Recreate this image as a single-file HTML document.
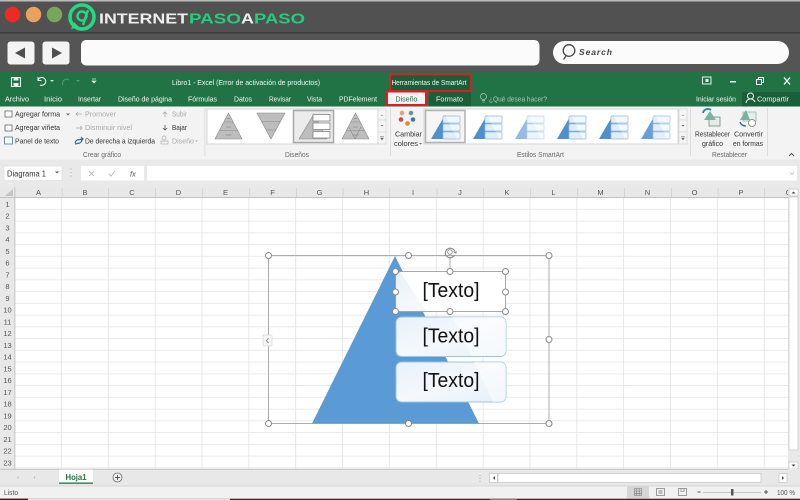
<!DOCTYPE html>
<html lang="es"><head><meta charset="utf-8"><title>Excel SmartArt</title>
<style>
html,body{margin:0;padding:0;background:#fff;width:800px;height:500px;overflow:hidden}
svg{display:block;filter:blur(.3px)}
text{font-family:"Liberation Sans",sans-serif;font-size:7.5px;fill:#333}
.g{fill:#222}.w{fill:#f2f7f4}.d{fill:#aaa}.h{fill:#555;font-size:7.5px}
.handle{fill:#fff;stroke:#8a8a8a;stroke-width:1}
</style></head><body>
<svg width="800" height="500" viewBox="0 0 800 500" xmlns="http://www.w3.org/2000/svg">
<defs>
<pattern id="grid" x="15" y="198" width="46.85" height="11.75" patternUnits="userSpaceOnUse">
<rect width="46.85" height="11.75" fill="#fff"/>
<rect x="46.1" width="1" height="11.75" fill="#e0e0e0"/>
<rect y="11" width="46.85" height="1" fill="#e4e4e4"/>
</pattern>
<linearGradient id="bx" x1="0" y1="0" x2="1" y2="1"><stop offset="0" stop-color="#e8f1f9"/><stop offset=".5" stop-color="#f4f8fc"/><stop offset="1" stop-color="#e6f0f9"/></linearGradient>
<g id="pyr"><path d="M13.500 0L27 26H0z" fill="#bdbdbd" stroke="#888" stroke-width=".6"/><path d="M9 9H18M4.500 17.500H22.500" stroke="#888" stroke-width=".6"/><path d="M12 5.500h3M11 14h5M10.500 22h6" stroke="#777" stroke-width=".6"/></g>
<g id="sa"><path d="M14 0L26 24H0z" fill="#4f8fcf"/><g fill="#f2f7fc" fill-opacity=".9" stroke="#8fb9e2" stroke-width=".7"><rect x="12" y="1" width="17" height="7" rx=".8"/><rect x="12" y="9" width="17" height="7" rx=".8"/><rect x="12" y="17" width="17" height="7" rx=".8"/></g></g>
</defs>

<!-- browser chrome -->
<rect width="800" height="72" fill="#515151"/>
<rect width="800" height="1.500" fill="#bdbdbd"/>
<rect y="32" width="800" height="1.500" fill="#3b3b3b"/>
<rect y="33.500" width="800" height="38.500" fill="#555"/>
<circle cx="12.500" cy="14.500" r="7.700" fill="#ef2a25"/>
<circle cx="33.500" cy="14.500" r="7.700" fill="#e9a15c"/>
<circle cx="54.500" cy="14.500" r="7.700" fill="#78a75b"/>
<circle cx="82" cy="17" r="12" fill="none" stroke="#1fdc80" stroke-width="3.600"/>
<path d="M71 29l3-7 5 5z" fill="#1fdc80"/>
<circle cx="82" cy="16" r="4.500" fill="none" stroke="#1fdc80" stroke-width="2.400"/>
<path d="M88 10L83 25" stroke="#1fdc80" stroke-width="2.400" fill="none"/>
<text x="99" y="23.500" style="font-size:15px;font-weight:bold;fill:#eee" textLength="89" lengthAdjust="spacingAndGlyphs">INTERNET</text>
<text x="189" y="23.500" style="font-size:15px;font-weight:bold;fill:#1fcf7b" textLength="52" lengthAdjust="spacingAndGlyphs">PASO</text>
<text x="241" y="23.500" style="font-size:15px;font-weight:bold;fill:#eee" textLength="13" lengthAdjust="spacingAndGlyphs">A</text>
<text x="254" y="23.500" style="font-size:15px;font-weight:bold;fill:#1fcf7b" textLength="51" lengthAdjust="spacingAndGlyphs">PASO</text>
<rect x="7.500" y="41.500" width="27" height="23" rx="3" fill="#f4f4f4"/>
<path d="M15 53L25 47.500V58.500z" fill="#4e4e4e"/>
<rect x="42.500" y="41.500" width="27" height="23" rx="3" fill="#f4f4f4"/>
<path d="M62 53L52 47.500V58.500z" fill="#4e4e4e"/>
<rect x="81" y="40" width="458.500" height="25.500" rx="5" fill="#fbfbfb"/>
<rect x="553" y="41" width="236" height="23" rx="11.500" fill="#fbfbfb"/>
<circle cx="569" cy="50.500" r="5.800" fill="none" stroke="#444" stroke-width="1.300"/>
<path d="M566 56l-2.500 3.500" stroke="#444" stroke-width="1.300"/>
<text x="579" y="55" style="font-size:8.500px;font-style:italic;font-weight:bold;fill:#444" textLength="33">Search</text>

<!-- Excel title & tabs -->
<rect y="72" width="800" height="34.500" fill="#217346"/>
<path d="M11.500 77.500h9v9h-9z" fill="none" stroke="#e8f2ec" stroke-width="1.100"/><rect x="13.500" y="77.500" width="5" height="3" fill="#e8f2ec"/><rect x="13.500" y="83" width="5" height="3" fill="#e8f2ec"/>
<path d="M38 80a4 4 0 1 1 2 5M38 77v3.500h3.500" fill="none" stroke="#f0f5f2" stroke-width="1.100"/>
<path d="M50 80l2 2 2-2z" fill="#d8e7de"/><path d="M63 85a4 4 0 0 1 6-5" fill="none" stroke="#5a9a75"/><path d="M76 80l2 2 2-2z" fill="#5a9a75"/>
<path d="M92 79h4M92 81l2 2 2-2z" stroke="#d8e7de" stroke-width=".7" fill="#d8e7de"/>
<text x="172" y="85" class="w" textLength="148" lengthAdjust="spacingAndGlyphs">Libro1 - Excel (Error de activación de productos)</text>
<rect x="390" y="74.500" width="81" height="16.500" fill="#1a5f39" stroke="#e01b24" stroke-width="2"/>
<text x="391.500" y="85" class="w" style="font-size:7px" textLength="75" lengthAdjust="spacingAndGlyphs">Herramientas de SmartArt</text>
<rect x="702.500" y="77" width="8.500" height="7" fill="none" stroke="#e8f2ec"/><rect x="705.500" y="79" width="3" height="3" fill="#e8f2ec"/>
<rect x="730" y="81" width="6" height="1.500" fill="#f2f7f4"/>
<path d="M756.500 79.500h5v5h-5zM758.500 79v-1.500h5v5h-1.500" fill="none" stroke="#f2f7f4"/>
<path d="M784 77.500l6 7M790 77.500l-6 7" stroke="#fff" stroke-width="1.300"/>
<g class="tabs">
<text x="5" y="101.500" class="w" textLength="24" lengthAdjust="spacingAndGlyphs">Archivo</text>
<text x="44" y="101.500" class="w" textLength="18" lengthAdjust="spacingAndGlyphs">Inicio</text>
<text x="78" y="101.500" class="w" textLength="23" lengthAdjust="spacingAndGlyphs">Insertar</text>
<text x="118" y="101.500" class="w" textLength="54" lengthAdjust="spacingAndGlyphs">Diseño de página</text>
<text x="188" y="101.500" class="w" textLength="29" lengthAdjust="spacingAndGlyphs">Fórmulas</text>
<text x="234" y="101.500" class="w" textLength="18" lengthAdjust="spacingAndGlyphs">Datos</text>
<text x="269" y="101.500" class="w" textLength="22" lengthAdjust="spacingAndGlyphs">Revisar</text>
<text x="307" y="101.500" class="w" textLength="15" lengthAdjust="spacingAndGlyphs">Vista</text>
<text x="339" y="101.500" class="w" textLength="38" lengthAdjust="spacingAndGlyphs">PDFelement</text>
</g>
<rect x="429" y="92" width="42" height="14.500" fill="#1a5f39"/>
<rect x="387" y="91.500" width="39" height="13.500" fill="#f3f3f3" stroke="#e01b24" stroke-width="2"/>
<text x="395.500" y="101.500" style="fill:#1e6b41" textLength="22" lengthAdjust="spacingAndGlyphs">Diseño</text>
<text x="436" y="101.500" class="w" textLength="27" lengthAdjust="spacingAndGlyphs">Formato</text>
<circle cx="483.500" cy="96.500" r="3" fill="none" stroke="#a5c8b3" stroke-width=".8"/><path d="M482 100.500h3M482.500 102h2" stroke="#a5c8b3" stroke-width=".8"/>
<text x="489" y="101.500" style="fill:#a5c8b3" textLength="58" lengthAdjust="spacingAndGlyphs">¿Qué desea hacer?</text>
<text x="696" y="101.500" class="w" textLength="40" lengthAdjust="spacingAndGlyphs">Iniciar sesión</text>
<rect x="742" y="92" width="58" height="14.500" fill="#1a5f39"/>
<circle cx="750.500" cy="96" r="3" fill="none" stroke="#f2f7f4"/><path d="M746 103c.5-3 2.500-4 4.500-4s3.500 1 4.500 3" fill="none" stroke="#f2f7f4"/>
<text x="757" y="101.500" class="w" textLength="32" lengthAdjust="spacingAndGlyphs">Compartir</text>

<!-- ribbon -->
<rect y="106.500" width="800" height="53" fill="#f3f3f3"/>
<rect y="159.500" width="800" height="27.500" fill="#e9e9e9"/>
<rect x="5" y="111" width="7" height="6" fill="#fff" stroke="#555" stroke-width=".7"/><rect x="5" y="125" width="7" height="6" fill="#fff" stroke="#555" stroke-width=".7"/><rect x="4.500" y="137" width="8" height="7" fill="#fff" stroke="#3c78a8" stroke-width=".8"/>
<text x="15" y="116.500" textLength="45" lengthAdjust="spacingAndGlyphs">Agregar forma</text><path d="M66 113.500l2 2 2-2z" fill="#666"/>
<text x="15" y="130" textLength="45" lengthAdjust="spacingAndGlyphs">Agregar viñeta</text>
<text x="15" y="143.500" textLength="44" lengthAdjust="spacingAndGlyphs">Panel de texto</text>
<path d="M76 114h6M78 112l-2 2 2 2" fill="none" stroke="#aaa" stroke-width=".8"/>
<text x="85" y="116.500" class="d" textLength="31" lengthAdjust="spacingAndGlyphs">Promover</text>
<path d="M76 128h6M80 126l2 2-2 2" fill="none" stroke="#aaa" stroke-width=".8"/>
<text x="85" y="130" class="d" textLength="47" lengthAdjust="spacingAndGlyphs">Disminuir nivel</text>
<path d="M75 143c1-4 4-3 7-4M81 137l2 2-2 2" fill="none" stroke="#2a6fa8" stroke-width="1.200"/><path d="M82 140c-1 4-4 3-7 4" fill="none" stroke="#2a6fa8" stroke-width="1.200"/>
<text x="85" y="143.500" textLength="70" lengthAdjust="spacingAndGlyphs">De derecha a izquierda</text>
<path d="M165 117v-5M163 114l2-2 2 2" fill="none" stroke="#aaa" stroke-width=".8"/>
<text x="172" y="116.500" class="d" textLength="15" lengthAdjust="spacingAndGlyphs">Subir</text>
<path d="M165 125v5M163 128l2 2 2-2" fill="none" stroke="#555" stroke-width=".8"/>
<text x="172" y="130" textLength="15" lengthAdjust="spacingAndGlyphs">Bajar</text>
<circle cx="164" cy="138" r="2" fill="none" stroke="#aaa" stroke-width=".7"/><rect x="161" y="141" width="7" height="3" fill="none" stroke="#aaa" stroke-width=".7"/>
<text x="172" y="143.500" class="d" textLength="22" lengthAdjust="spacingAndGlyphs">Diseño</text><path d="M195 140.500l1.500 1.500 1.500-1.500z" fill="#aaa"/>
<text x="83" y="157" style="fill:#666" textLength="38" lengthAdjust="spacingAndGlyphs">Crear gráfico</text>
<rect x="204.500" y="108" width=".8" height="48" fill="#d8d8d8"/>

<rect x="207" y="109" width="171" height="35" fill="#fff" stroke="#d4d4d4"/>
<use href="#pyr" x="215" y="113"/>
<path d="M257 113h28l-14 26z" fill="#bdbdbd" stroke="#888" stroke-width=".6"/><path d="M261.500 121.500h19M266 130h10" stroke="#888" stroke-width=".6"/>
<rect x="293.500" y="110.500" width="40" height="32" fill="#ececec" stroke="#a8a8a8" stroke-width="1.500"/>
<path d="M314 114l13 25h-28z" fill="#bdbdbd" stroke="#888" stroke-width=".6"/>
<g fill="#fff" stroke="#777" stroke-width=".7"><rect x="313" y="114.500" width="17" height="6.500"/><rect x="313" y="123" width="17" height="6.500"/><rect x="313" y="131.500" width="17" height="6.500"/></g>
<use href="#pyr" x="342" y="113"/><path d="M349 127l6 12 6-12" fill="none" stroke="#888" stroke-width=".6"/>
<g fill="#f5f5f5" stroke="#d4d4d4" stroke-width=".7"><rect x="378" y="109" width="8" height="11"/><rect x="378" y="120" width="8" height="12"/><rect x="378" y="132" width="8" height="12"/></g>
<path d="M380.500 116l1.500-1.500 1.500 1.500z" fill="#aaa"/><path d="M380.500 125l1.500 1.500 1.500-1.500z" fill="#777"/><path d="M380 136.500h4M380.500 138l1.500 2 1.500-2z" stroke="#666" stroke-width=".5" fill="#666"/>
<text x="285" y="157" style="fill:#666" textLength="24" lengthAdjust="spacingAndGlyphs">Diseños</text>
<rect x="390" y="108" width=".8" height="48" fill="#d8d8d8"/>

<circle cx="402" cy="113" r="2.300" fill="#e9a07a"/><circle cx="411" cy="113" r="2.300" fill="#65958f"/><circle cx="401" cy="119.500" r="2.300" fill="#cf4a4a"/><circle cx="413" cy="119.500" r="2.300" fill="#3d72b5"/><circle cx="407.500" cy="123.500" r="2.300" fill="#db8b35"/>
<text x="395" y="136.500" textLength="27" lengthAdjust="spacingAndGlyphs">Cambiar</text>
<text x="394" y="146" textLength="24" lengthAdjust="spacingAndGlyphs">colores</text><path d="M419 143l1.500 1.500 1.500-1.500z" fill="#666"/>

<rect x="424" y="109" width="254" height="35" fill="#fff" stroke="#d4d4d4"/>
<rect x="425.500" y="110.500" width="39.500" height="32" fill="#f6f6f6" stroke="#b2b2b2" stroke-width="1.500"/>
<use href="#sa" x="431" y="115"/><use href="#sa" x="473" y="115"/>
<use href="#sa" x="515" y="115" opacity=".6"/><use href="#sa" x="557" y="115"/><use href="#sa" x="599" y="115"/><use href="#sa" x="641" y="115" opacity=".85"/>
<g fill="#f5f5f5" stroke="#d4d4d4" stroke-width=".7"><rect x="679" y="109" width="8" height="11"/><rect x="679" y="120" width="8" height="12"/><rect x="679" y="132" width="8" height="12"/></g>
<path d="M681.500 116l1.500-1.500 1.500 1.500z" fill="#aaa"/><path d="M681.500 125l1.500 1.500 1.500-1.500z" fill="#555"/><path d="M681 136.500h4M681.500 138l1.500 2 1.500-2z" stroke="#666" stroke-width=".5" fill="#666"/>
<text x="517" y="157" style="fill:#666" textLength="47" lengthAdjust="spacingAndGlyphs">Estilos SmartArt</text>
<rect x="690" y="108" width=".8" height="48" fill="#d8d8d8"/>

<rect x="709" y="117" width="11" height="9" fill="#e6ebe9" stroke="#6d8a80" stroke-width=".8"/><path d="M704 120l6-9 6 9z" fill="#7ab3a0"/><path d="M703 113a5 5 0 0 1 8-3" fill="none" stroke="#2b7ab8" stroke-width="1.800"/>
<rect x="743" y="112" width="13" height="9" fill="#e9eeec" stroke="#8aa" stroke-width=".7"/><path d="M746 110l-6 10h10z" fill="#79b29f"/><circle cx="752" cy="123" r="3.500" fill="#fff" stroke="#777" stroke-width=".8"/><path d="M740 122c1 3 3 4 6 4" fill="none" stroke="#2b6fb8" stroke-width="1.500"/>
<text x="695" y="136.500" textLength="35" lengthAdjust="spacingAndGlyphs">Restablecer</text>
<text x="702" y="146" textLength="21" lengthAdjust="spacingAndGlyphs">gráfico</text>
<text x="734" y="136.500" textLength="29" lengthAdjust="spacingAndGlyphs">Convertir</text>
<text x="733" y="146" textLength="30" lengthAdjust="spacingAndGlyphs">en formas</text>
<text x="712" y="157" style="fill:#666" textLength="35" lengthAdjust="spacingAndGlyphs">Restablecer</text>
<rect x="767" y="108" width=".8" height="48" fill="#d8d8d8"/>
<path d="M789 156l2.500-2.500 2.500 2.500" fill="none" stroke="#555"/>

<!-- formula bar -->
<rect x="4" y="166" width="58" height="14.500" fill="#fff" stroke="#dcdcdc" stroke-width=".6"/>
<text x="7" y="176.500" style="font-size:8px" textLength="39" lengthAdjust="spacingAndGlyphs">Diagrama 1</text>
<path d="M55 171.500l2 2 2-2z" fill="#555"/>
<path d="M71 168.500v1M71 172v1M71 175.500v1" stroke="#aaa"/>
<rect x="81" y="166" width="63" height="14.500" fill="#fff"/>
<path d="M89 171l5 5M94 171l-5 5" stroke="#bbb"/><path d="M109 174l2 2 4-5" fill="none" stroke="#bbb"/>
<text x="130" y="176.500" style="font-size:7.500px;font-style:italic;fill:#555">fx</text>
<rect x="147" y="166" width="650" height="14.500" fill="#fff"/>
<path d="M790 172.500l2 2 2-2" fill="none" stroke="#ccc"/>

<!-- sheet -->
<rect x="0" y="187" width="800" height="11" fill="#e8e8e8"/>
<rect x="0" y="198" width="15" height="271" fill="#e8e8e8"/>
<rect x="15" y="198" width="773" height="271" fill="url(#grid)"/>
<rect x="0" y="197.200" width="788" height=".8" fill="#b8b8b8"/>
<rect x="14.500" y="187" width=".8" height="282" fill="#b8b8b8"/>
<path d="M5 196l8-7v7z" fill="#c4c4c4"/>
<g fill="#cfcfcf"><rect x="61.700" y="188" width=".8" height="9"/><rect x="108.300" y="188" width=".8" height="9"/><rect x="155.300" y="188" width=".8" height="9"/><rect x="202.300" y="188" width=".8" height="9"/><rect x="249.300" y="188" width=".8" height="9"/><rect x="296" y="188" width=".8" height="9"/><rect x="342.700" y="188" width=".8" height="9"/><rect x="389.300" y="188" width=".8" height="9"/><rect x="436.700" y="188" width=".8" height="9"/><rect x="483.300" y="188" width=".8" height="9"/><rect x="530.300" y="188" width=".8" height="9"/><rect x="577.300" y="188" width=".8" height="9"/><rect x="624" y="188" width=".8" height="9"/><rect x="671" y="188" width=".8" height="9"/><rect x="717.700" y="188" width=".8" height="9"/><rect x="764.300" y="188" width=".8" height="9"/></g>
<g class="cols" text-anchor="middle">
<text x="38.500" y="195" class="h">A</text><text x="85" y="195" class="h">B</text><text x="132" y="195" class="h">C</text><text x="178.500" y="195" class="h">D</text><text x="225.500" y="195" class="h">E</text><text x="272.500" y="195" class="h">F</text><text x="319.500" y="195" class="h">G</text><text x="366.500" y="195" class="h">H</text><text x="413" y="195" class="h">I</text><text x="460" y="195" class="h">J</text><text x="507" y="195" class="h">K</text><text x="553.500" y="195" class="h">L</text><text x="600.500" y="195" class="h">M</text><text x="647.500" y="195" class="h">N</text><text x="694.500" y="195" class="h">O</text><text x="741" y="195" class="h">P</text><text x="788.500" y="195" class="h">Q</text>
</g>
<g class="rows" text-anchor="middle">
<text x="7.500" y="207" class="h">1</text><text x="7.500" y="218.700" class="h">2</text><text x="7.500" y="230.500" class="h">3</text><text x="7.500" y="242.200" class="h">4</text><text x="7.500" y="254" class="h">5</text><text x="7.500" y="265.700" class="h">6</text><text x="7.500" y="277.500" class="h">7</text><text x="7.500" y="289.200" class="h">8</text><text x="7.500" y="301" class="h">9</text><text x="7.500" y="312.700" class="h">10</text><text x="7.500" y="324.500" class="h">11</text><text x="7.500" y="336.200" class="h">12</text><text x="7.500" y="348" class="h">13</text><text x="7.500" y="359.700" class="h">14</text><text x="7.500" y="371.500" class="h">15</text><text x="7.500" y="383.200" class="h">16</text><text x="7.500" y="395" class="h">17</text><text x="7.500" y="406.700" class="h">18</text><text x="7.500" y="418.500" class="h">19</text><text x="7.500" y="430.200" class="h">20</text><text x="7.500" y="442" class="h">21</text><text x="7.500" y="453.700" class="h">22</text><text x="7.500" y="465.500" class="h">23</text>
</g>

<!-- scrollbars -->
<rect x="788" y="187" width="12" height="282" fill="#e9e9e9"/>
<rect x="789" y="189" width="9" height="7" fill="#fff" stroke="#bbb" stroke-width=".6"/><path d="M791.500 193.500l2-2 2 2z" fill="#444"/>
<rect x="789" y="197" width="9" height="253" fill="#fff" stroke="#bbb" stroke-width=".6"/>
<rect x="789" y="462" width="9" height="7" fill="#fff" stroke="#bbb" stroke-width=".6"/><path d="M791.500 464.500l2 2 2-2z" fill="#444"/>
<rect x="0" y="469" width="800" height="17" fill="#e8e8e8"/>
<rect x="0" y="468.800" width="788" height=".8" fill="#b8b8b8"/>
<path d="M17 477.500l1.500-1.500v3zM34 476v3l1.500-1.500z" fill="#bbb"/>
<rect x="59" y="469.500" width="34" height="14" fill="#fff"/>
<rect x="59" y="482.500" width="34" height="1.300" fill="#217346"/>
<text x="65.500" y="480" style="font-weight:bold;fill:#217346;font-size:8px" textLength="21" lengthAdjust="spacingAndGlyphs">Hoja1</text>
<circle cx="117.500" cy="477.500" r="4.500" fill="#f2f2f2" stroke="#666" stroke-width=".8"/><path d="M115 477.500h5M117.500 475v5" stroke="#555" stroke-width="1"/>
<path d="M480 475v1M480 478v1M480 481v1" stroke="#aaa"/>
<rect x="489.500" y="473.500" width="8" height="9" fill="#fff" stroke="#bbb" stroke-width=".6"/><path d="M495 476l-2 2 2 2z" fill="#444"/>
<rect x="498" y="473.500" width="263" height="9" fill="#fff" stroke="#bbb" stroke-width=".6"/>
<rect x="779" y="473.500" width="8" height="9" fill="#fff" stroke="#bbb" stroke-width=".6"/><path d="M782 476l2 2-2 2z" fill="#444"/>

<!-- status bar -->
<rect y="486" width="800" height="12.500" fill="#f1f1f1"/>
<rect y="485.600" width="800" height=".8" fill="#d0d0d0"/>
<text x="4" y="495" style="fill:#555" textLength="14" lengthAdjust="spacingAndGlyphs">Listo</text>
<rect x="627" y="486.500" width="22" height="12" fill="#d6d6d6"/>
<path d="M634.500 488.500h7v7h-7zM634.500 491h7M634.500 493.300h7M636.800 488.500v7M639.200 488.500v7" fill="none" stroke="#777" stroke-width=".6"/>
<rect x="656.500" y="488.500" width="8" height="7" fill="none" stroke="#777" stroke-width=".7"/><rect x="658.500" y="490" width="4" height="4" fill="#bbb"/>
<rect x="678.500" y="488.500" width="8" height="7" fill="none" stroke="#777" stroke-width=".7"/><path d="M681 488.500v3h3v-3" fill="none" stroke="#777" stroke-width=".6"/>
<rect x="697.500" y="491.500" width="3" height="1" fill="#555"/>
<rect x="703" y="492" width="58" height=".8" fill="#bbb"/>
<rect x="731" y="489" width="2.500" height="6.500" fill="#555"/>
<path d="M764 492h4M766 490v4" stroke="#555"/>
<text x="777" y="495" style="fill:#555" textLength="18" lengthAdjust="spacingAndGlyphs">100 %</text>
<rect y="498.700" width="800" height="1.300" fill="#3d2a2a"/>
<rect y="498.700" width="28" height="1.300" fill="#4a1414"/>
<rect x="28" y="498.700" width="202" height="1.300" fill="#e4e4e4"/>
<rect x="490" y="498.700" width="27" height="1.300" fill="#8a7a7a"/>

<!-- SmartArt -->
<rect x="268.500" y="255.500" width="280.500" height="168" fill="none" stroke="#adadad" stroke-width="1"/>
<path d="M395 256L479 423.500H312z" fill="#5b9bd5"/>
<rect x="396" y="272" width="110" height="39.500" rx="5" fill="url(#bx)"/>
<path d="M400 272H506v34a5 5 0 0 1-5 5H426z" fill="#fff"/>
<rect x="396" y="317" width="110" height="39.500" rx="5.500" fill="url(#bx)" stroke="#9dc3e6" stroke-width=".9"/>
<path d="M452 317h49a5 5 0 0 1 5 5v29a5 5 0 0 1-5 5h-29z" fill="#fff" opacity=".55"/>
<rect x="396" y="362" width="110" height="40" rx="5.500" fill="url(#bx)" stroke="#9dc3e6" stroke-width=".9"/>
<path d="M474 362h27a5 5 0 0 1 5 5v30a5 5 0 0 1-5 5h-8z" fill="#fff" opacity=".45"/>
<text x="451" y="297" text-anchor="middle" style="font-size:20px;fill:#111" textLength="57" lengthAdjust="spacingAndGlyphs">[Texto]</text>
<text x="451" y="342.500" text-anchor="middle" style="font-size:20px;fill:#111" textLength="57" lengthAdjust="spacingAndGlyphs">[Texto]</text>
<text x="451" y="387" text-anchor="middle" style="font-size:20px;fill:#111" textLength="57" lengthAdjust="spacingAndGlyphs">[Texto]</text>
<rect x="395.500" y="271.500" width="110" height="40" fill="none" stroke="#a0a0a0" stroke-width=".9"/>
<path d="M450 257v14" stroke="#a0a0a0" stroke-width=".9"/>
<path d="M454.500 255a4.800 4.800 0 1 1-1-5.500l1.500 1.500" fill="none" stroke="#8a8a8a" stroke-width="1.100"/><circle cx="450" cy="252" r="2.300" fill="none" stroke="#8a8a8a" stroke-width=".9"/><path d="M453 251.500h4l-1 2.500z" fill="#8a8a8a"/>
<g class="handle"><circle cx="268.500" cy="255.500" r="3"/><circle cx="408.500" cy="255.500" r="3"/><circle cx="549" cy="255.500" r="3"/><circle cx="549" cy="339.500" r="3"/><circle cx="268.500" cy="423.500" r="3"/><circle cx="408.500" cy="423.500" r="3"/><circle cx="549" cy="423.500" r="3"/>
<circle cx="395.500" cy="271.500" r="3"/><circle cx="450" cy="271.500" r="3"/><circle cx="505.500" cy="271.500" r="3"/><circle cx="395.500" cy="292" r="3"/><circle cx="505.500" cy="292" r="3"/><circle cx="395.500" cy="311.500" r="3"/><circle cx="450" cy="311.500" r="3"/><circle cx="505.500" cy="311.500" r="3"/></g>
<rect x="263" y="335" width="9" height="11" rx="1" fill="#f5f5f5" stroke="#d6d6d6" stroke-width=".7"/><path d="M268.500 338l-2 2.500 2 2.500" fill="none" stroke="#777" stroke-width=".8"/>
</svg>
</body></html>
